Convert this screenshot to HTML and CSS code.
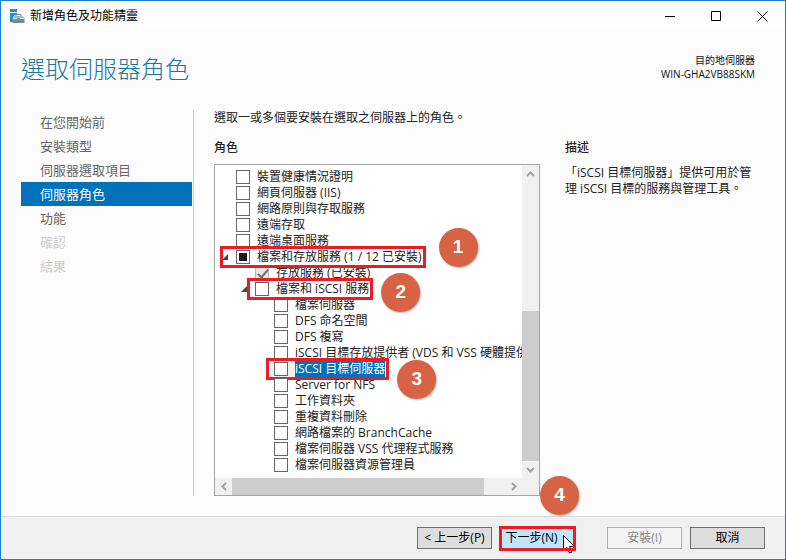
FILE: index.html
```html
<!DOCTYPE html>
<html lang="zh-Hant">
<head>
  <meta charset="UTF-8">
  <meta name="viewport" content="width=device-width, initial-scale=1.0">
  <title>新增角色及功能精靈</title>
  <link rel="stylesheet" href="styles.css">
</head>
<body>
  <div class="window">
    <header class="titlebar">
      <svg class="app-icon" width="16" height="16" viewBox="0 0 16 16">
        <path d="M0 1h7v3H0zM0 5h7v2H5L3 9v5H0z" fill="#1e8fe0"/>
        <path d="M6 8V6.500h5V8" fill="none" stroke="#6f8ca3"/>
        <path d="M2.500 10l2-2h8l2 2v1h-12z" fill="#9fb4c5"/>
        <path d="M2.500 10.500h12V15h-12z" fill="#6f8ca3"/>
        <path d="M3 10.500h4M10 10.500h4" stroke="#e6eef4"/>
      </svg>
      <span class="caption">新增角色及功能精靈</span>
      <div class="window-buttons">
        <button type="button" aria-label="最小化"><svg width="11" height="11" viewBox="0 0 11 11"><path d="M0 5.500h10"/></svg></button>
        <button type="button" aria-label="最大化"><svg width="11" height="11" viewBox="0 0 11 11"><path d="M.5.500h9v9h-9z"/></svg></button>
        <button type="button" aria-label="關閉"><svg width="11" height="11" viewBox="0 0 11 11"><path d="M.5.500l10 10M10.500.500l-10 10"/></svg></button>
      </div>
    </header>

    <div class="heading">
      <h1>選取伺服器角色</h1>
      <div class="target">
        <p>目的地伺服器</p>
        <p>WIN-GHA2VB88SKM</p>
      </div>
    </div>

    <div class="main">
      <nav class="steps">
        <a href="#">在您開始前</a>
        <a href="#">安裝類型</a>
        <a href="#">伺服器選取項目</a>
        <a href="#" class="active">伺服器角色</a>
        <a href="#">功能</a>
        <a class="disabled">確認</a>
        <a class="disabled">結果</a>
      </nav>

      <section class="roles">
        <p>選取一或多個要安裝在選取之伺服器上的角色。</p>
        <h2>角色</h2>
        <div class="listbox">
          <ul class="tree">
            <li><label><input type="checkbox"><span>裝置健康情況證明</span></label></li>
            <li><label><input type="checkbox"><span>網頁伺服器 (IIS)</span></label></li>
            <li><label><input type="checkbox"><span>網路原則與存取服務</span></label></li>
            <li><label><input type="checkbox"><span>遠端存取</span></label></li>
            <li><label><input type="checkbox"><span>遠端桌面服務</span></label></li>
            <li class="open">
              <label class="marked wide"><input type="checkbox" class="partial"><span>檔案和存放服務 (1 / 12 已安裝)</span><b class="badge one">1</b></label>
              <ul>
                <li><label><input type="checkbox" checked disabled><span>存放服務 (已安裝)</span></label></li>
                <li class="open">
                  <label class="marked"><input type="checkbox"><span>檔案和 iSCSI 服務</span><b class="badge two">2</b></label>
                  <ul>
                    <li><label><input type="checkbox"><span>檔案伺服器</span></label></li>
                    <li><label><input type="checkbox"><span>DFS 命名空間</span></label></li>
                    <li><label><input type="checkbox"><span>DFS 複寫</span></label></li>
                    <li><label><input type="checkbox"><span>iSCSI 目標存放提供者 (VDS 和 VSS 硬體提供者)</span></label></li>
                    <li><label class="marked selected"><input type="checkbox"><span>iSCSI 目標伺服器</span><b class="badge three">3</b></label></li>
                    <li><label><input type="checkbox"><span>Server for NFS</span></label></li>
                    <li><label><input type="checkbox"><span>工作資料夾</span></label></li>
                    <li><label><input type="checkbox"><span>重複資料刪除</span></label></li>
                    <li><label><input type="checkbox"><span>網路檔案的 BranchCache</span></label></li>
                    <li><label><input type="checkbox"><span>檔案伺服器 VSS 代理程式服務</span></label></li>
                    <li><label><input type="checkbox"><span>檔案伺服器資源管理員</span></label></li>
                  </ul>
                </li>
              </ul>
            </li>
          </ul>
          <div class="vscroll">
            <svg width="17" height="17" viewBox="0 0 17 17"><path d="M5 11l3.500-3.500L12 11"/></svg>
            <div class="thumb"></div>
            <svg width="17" height="17" viewBox="0 0 17 17"><path d="M5 7l3.500 3.500L12 7"/></svg>
          </div>
          <div class="hscroll">
            <svg width="17" height="17" viewBox="0 0 17 17"><path d="M11 5L7.500 8.500 11 12"/></svg>
            <div class="thumb"></div>
            <svg width="17" height="17" viewBox="0 0 17 17"><path d="M7 5l3.500 3.500L7 12"/></svg>
          </div>
        </div>
      </section>

      <section class="description">
        <h2>描述</h2>
        <p>「iSCSI 目標伺服器」提供可用於管理 iSCSI 目標的服務與管理工具。</p>
      </section>
    </div>

    <footer class="footer">
      <button type="button">&lt; 上一步(P)</button>
      <div class="next">
        <button type="button" class="primary">下一步(N)</button>
        <b class="badge four">4</b>
        <svg class="cursor" width="12" height="19" viewBox="0 0 12 19"><path d="M.5.500v15l3.500-3 2.500 5.500 2.500-1-2.500-5.500h5z" fill="#fff" stroke="#000"/></svg>
      </div>
      <button type="button" disabled>安裝(I)</button>
      <button type="button">取消</button>
    </footer>
  </div>
</body>
</html>
```

FILE: styles.css
```css
* {
  box-sizing: border-box;
}

body {
  margin: 0;
  font-family: "Open Sans", "Noto Sans CJK TC", sans-serif;
  font-size: 12px;
  line-height: 16px;
  color: #222;
}

h1, h2, p, ul {
  margin: 0;
  padding: 0;
}

ul {
  list-style: none;
}

.window {
  display: flex;
  flex-direction: column;
  min-height: 100vh;
  background: #fcfcfc;
  border: 1px solid #1a7fd4;
}

/* Title bar */
.titlebar {
  display: flex;
  align-items: center;
  height: 30px;
  padding-left: 9px;
  background: #fff;
  color: #000;
}

.caption {
  flex: 1;
  margin-left: 4px;
}

.window-buttons {
  display: flex;
}

.window-buttons button {
  display: flex;
  align-items: center;
  justify-content: center;
  width: 46px;
  height: 28px;
  padding: 0;
  border: none;
  background: none;
}

.window-buttons path {
  fill: none;
  stroke: #000;
}

/* Heading */
.heading {
  display: flex;
  justify-content: space-between;
  padding: 20px 30px 0 20px;
}

h1 {
  font-size: 24px;
  line-height: 36px;
  font-weight: 300;
  color: #16799c;
}

.target {
  padding-top: 2px;
  font-size: 10px;
  line-height: 14px;
  text-align: right;
  color: #111;
}

/* Steps, roles and description */
.main {
  flex: 1;
  display: grid;
  grid-template-columns: 173px 1fr 190px;
  padding: 23px 30px 20px 20px;
}

.steps {
  border-right: 1px solid #ccc;
}

.steps a {
  display: block;
  margin-right: 1px;
  padding-left: 19px;
  font-size: 13px;
  line-height: 24px;
  color: #666;
  text-decoration: none;
}

.steps .active {
  background: #0072bc;
  color: #fff;
}

.steps .disabled {
  color: #ccc;
}

h2 {
  font-size: 12px;
  font-weight: 500;
}

.roles {
  min-width: 0;
  padding: 0 25px 0 20px;
}

.roles h2 {
  margin: 14px 0 8px;
}

.description h2 {
  margin: 30px 0 9px;
}

/* Role list */
.listbox {
  display: grid;
  grid-template-columns: 1fr 17px;
  grid-template-rows: 1fr 17px;
  background: linear-gradient(#f0f0f0, #f0f0f0) right bottom / 17px 17px no-repeat #fff;
  border: 1px solid #a5a5a5;
}

.tree {
  min-width: 0;
  overflow: hidden;
  padding: 4px 0 5px 21px;
  white-space: nowrap;
}

.tree ul {
  padding-left: 19px;
}

.tree li {
  position: relative;
}

.tree label {
  display: flex;
  align-items: center;
  width: max-content;
  height: 16px;
  position: relative;
}

.tree input {
  appearance: none;
  width: 14px;
  height: 14px;
  margin: 0 7px 0 0;
  padding: 2px;
  background: #fff;
  border: 1px solid #666;
}

.tree .partial {
  background: linear-gradient(#1c1c1c, #1c1c1c) content-box;
}

.tree input:disabled {
  position: relative;
  background: #e6e6e6;
  border-color: #bbb;
}

.tree input:disabled::before {
  content: "";
  position: absolute;
  left: 4px;
  top: 0;
  width: 4px;
  height: 9px;
  border: solid #707070;
  border-width: 0 2px 2px 0;
  transform: rotate(40deg);
}

.tree .open::before {
  content: "";
  position: absolute;
  left: -14px;
  top: 5px;
  width: 6px;
  height: 6px;
  background: #444;
  clip-path: polygon(100% 0, 100% 100%, 0 100%);
}

.selected {
  z-index: 0;
}

.selected::before {
  content: "";
  position: absolute;
  z-index: -1;
  left: -4px;
  top: 0;
  width: 25px;
  height: 16px;
  background: #f0f0f0;
}

.selected span {
  background: #0072bc;
  color: #fff;
}

/* Red frames and step numbers */
.marked::after,
.next::after {
  content: "";
  position: absolute;
  z-index: 2;
  top: -3px;
  right: -4px;
  bottom: -3px;
  left: -8px;
  border: 3px solid #ed1c24;
}

.wide::after {
  left: -16px;
}

.badge {
  position: absolute;
  z-index: 2;
  width: 39px;
  height: 39px;
  border-radius: 50%;
  background: #d86344;
  box-shadow: 1px 1px 2px rgba(0, 0, 0, 0.3);
  color: #fff;
  font-family: "Liberation Sans", sans-serif;
  font-size: 19px;
  line-height: 38px;
  text-align: center;
}

.one {
  top: -21px;
  left: calc(100% + 17px);
}

.two {
  top: -8px;
  left: calc(100% + 12px);
}

.three {
  top: -1px;
  left: calc(100% + 12px);
}

.four {
  top: -51px;
  right: -4px;
}

/* Scrollbars */
.vscroll,
.hscroll {
  display: flex;
  background: #f0f0f0;
}

.vscroll {
  flex-direction: column;
}

.vscroll .thumb {
  height: 150px;
  margin-top: auto;
}

.hscroll .thumb {
  width: 82%;
  margin-right: auto;
}

.thumb {
  background: #cdcdcd;
}

.vscroll path,
.hscroll path {
  fill: none;
  stroke: #a0a0a0;
  stroke-width: 2;
}

/* Footer */
.footer {
  display: flex;
  justify-content: flex-end;
  gap: 8px;
  padding: 10px 20px;
  background: #f0f0f0;
  border-top: 1px solid #d9d9d9;
}

.footer button {
  width: 75px;
  height: 22px;
  padding: 0;
  font: inherit;
  color: #000;
  background: #ddd;
  border: 1px solid #707070;
}

.footer button:disabled {
  color: #888;
  background: #f4f4f4;
  border-color: #adb2b5;
}

.footer .primary {
  padding-right: 12px;
  background: #bee6fd;
}

.next {
  position: relative;
  margin-right: 24px;
}

.next::after {
  top: -1px;
  right: -1px;
  bottom: -2px;
  left: -1px;
}

/* Pointer passes under the frame */
.cursor {
  position: absolute;
  z-index: 1;
  right: 0;
  top: 8px;
}
```
